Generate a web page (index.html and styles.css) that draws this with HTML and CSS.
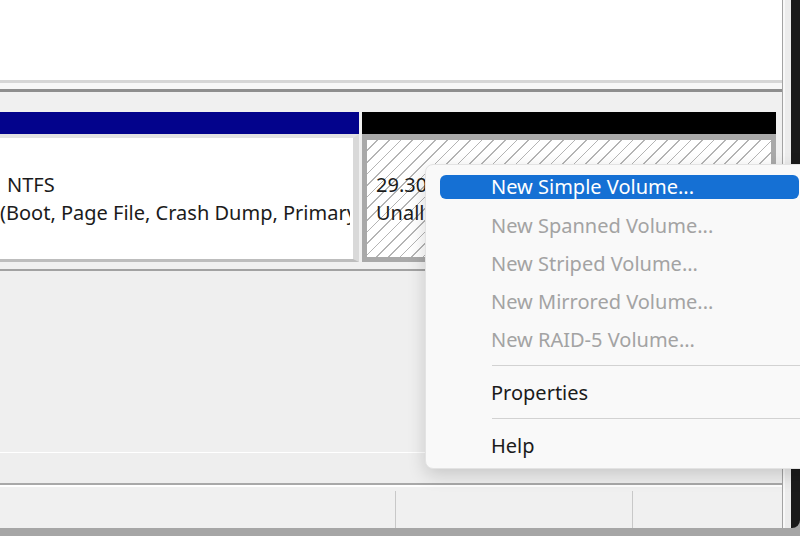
FILE: index.html
```html
<!DOCTYPE html>
<html lang="en">

<head>
  <meta charset="UTF-8" />
  <title>Disk Management</title>
  <link rel="stylesheet" href="styles.css">
</head>

<body>

  <div class="screen">
    <!-- Main console pane -->
    <div class="app">
      <div class="volume-list"></div>
      <div class="splitter"></div>

      <!-- Graphical disk view -->
      <div class="disk-view">
        <div class="disk-row">
          <div class="partition system">
            <div class="part-head"></div>
            <div class="part-body">
              <p>NTFS</p>
              <p>(Boot, Page File, Crash Dump, Primary Partition)</p>
            </div>
          </div>
          <div class="partition unallocated">
            <div class="part-head"></div>
            <div class="part-body">
              <p>29.30 GB</p>
              <p>Unallocated</p>
            </div>
          </div>
        </div>
        <div class="disk-empty"></div>
        <div class="disk-foot"></div>
      </div>

      <div class="status-bar">
        <div class="status-cell"></div>
        <div class="status-cell"></div>
        <div class="status-cell"></div>
      </div>
    </div>
    <div class="rim"></div>
    <div class="edge"></div>
  </div>
  <div class="taskbar"></div>

  <!-- Context menu for the unallocated space -->
  <ul class="context-menu">
    <li class="active"><span>New Simple Volume...</span></li>
    <li class="disabled"><span>New Spanned Volume...</span></li>
    <li class="disabled"><span>New Striped Volume...</span></li>
    <li class="disabled"><span>New Mirrored Volume...</span></li>
    <li class="disabled"><span>New RAID-5 Volume...</span></li>
    <li class="separator"></li>
    <li><span>Properties</span></li>
    <li class="separator"></li>
    <li><span>Help</span></li>
  </ul>

</body>

</html>
```

FILE: styles.css
```css
body {
  margin: 0;
  width: 800px;
  height: 536px;
  overflow: hidden;
  font-family: 'Noto Sans', 'Open Sans', sans-serif;
  color: #1b1b1b;
  background: #a6a6a6;
  position: relative;
}

.screen {
  display: flex;
  height: 528px;
}

.app {
  width: 782px;
  border-right: 1px solid #a3a3a3;
  background: #f0f0f0;
  display: flex;
  flex-direction: column;
}

.volume-list {
  height: 80px;
  background: #fff;
}

.splitter {
  height: 6px;
  border-top: 3px solid #d6d6d6;
  border-bottom: 3px solid #8e8e8e;
  background: #f7f7f7;
}

.disk-view {
  padding-top: 20px;
  background: #f0f0f0;
}

.disk-row {
  display: flex;
  gap: 3px;
}

.partition {
  display: flex;
  flex-direction: column;
}

.part-head {
  height: 22px;
}

.part-body {
  height: 128px;
  box-sizing: border-box;
  font-size: 20px;
  line-height: 28px;
  white-space: nowrap;
  overflow: hidden;
  display: flex;
  flex-direction: column;
  justify-content: center;
}

.part-body p {
  margin: 0;
  overflow: hidden;
}

.system {
  width: 359px;
}

.system .part-head {
  background: #03038c;
}

.system .part-body {
  background: #fff;
  border-top: 4px solid #e2e2e2;
  border-right: 6px solid #d9d9d9;
  border-bottom: 3px solid #bdbdbd;
  padding: 0 3px 0 0;
}

.system .part-body p:first-child {
  padding-left: 7px;
}

.unallocated {
  width: 414px;
}

.unallocated .part-head {
  background: #000;
}

.unallocated .part-body {
  border: 5px solid #a9a9a9;
  border-top-width: 6px;
  padding: 0 0 0 9px;
  background-color: #fff;
  background-image: repeating-linear-gradient(135deg, transparent 0 7px, #b4b4b4 7px 8.2px);
}

.disk-empty {
  height: 181px;
  margin-top: 7px;
  border-top: 2px solid #a2a2a2;
  border-bottom: 1px solid #fff;
  background: #efefef;
}

.disk-foot {
  height: 30px;
  background: #eeeeee;
}

.status-bar {
  flex-grow: 1;
  display: flex;
  border-top: 2px solid #a8a8a8;
  box-shadow: inset 0 2px 0 #fff;
  background: #f0f0f0;
}

.status-cell {
  flex-shrink: 0;
  width: 395px;
  border-right: 1px solid #c8c8c8;
  margin: 6px 0 0;
}

.status-cell:nth-child(2) {
  width: 236px;
}

.status-cell:last-child {
  width: auto;
  flex-grow: 1;
  border-right: none;
}

.rim {
  width: 8px;
  background: #ececec;
  border-left: 2px solid #f8f8f8;
  box-sizing: border-box;
}

.edge {
  width: 9px;
  background: #1b1b1b;
  border-bottom-right-radius: 8px;
}

.taskbar {
  height: 8px;
  background: #a6a6a6;
}

/* Context menu */
.context-menu {
  position: absolute;
  left: 425px;
  top: 164px;
  width: 390px;
  margin: 0;
  padding: 3px 0 4px;
  list-style: none;
  background: #f9f9f9;
  border: 1px solid #e3e3e3;
  border-radius: 8px;
  box-shadow: 0 6px 18px rgba(0, 0, 0, 0.16);
  font-size: 20px;
}

.context-menu li {
  height: 38px;
  display: flex;
  align-items: center;
  padding-left: 65px;
}

.context-menu li.active {
  padding-left: 14px;
}

.context-menu li.active span {
  flex-grow: 1;
  height: 24px;
  line-height: 24px;
  margin-right: 17px;
  padding-left: 51px;
  background: #1570d4;
  color: #fff;
  border-radius: 6px;
}

.context-menu li.disabled {
  color: #a3a3a3;
}

.context-menu li.separator {
  height: 15px;
  padding-left: 66px;
}

.context-menu li.separator::after {
  content: '';
  flex-grow: 1;
  border-top: 1px solid #d2d2d2;
}
```
